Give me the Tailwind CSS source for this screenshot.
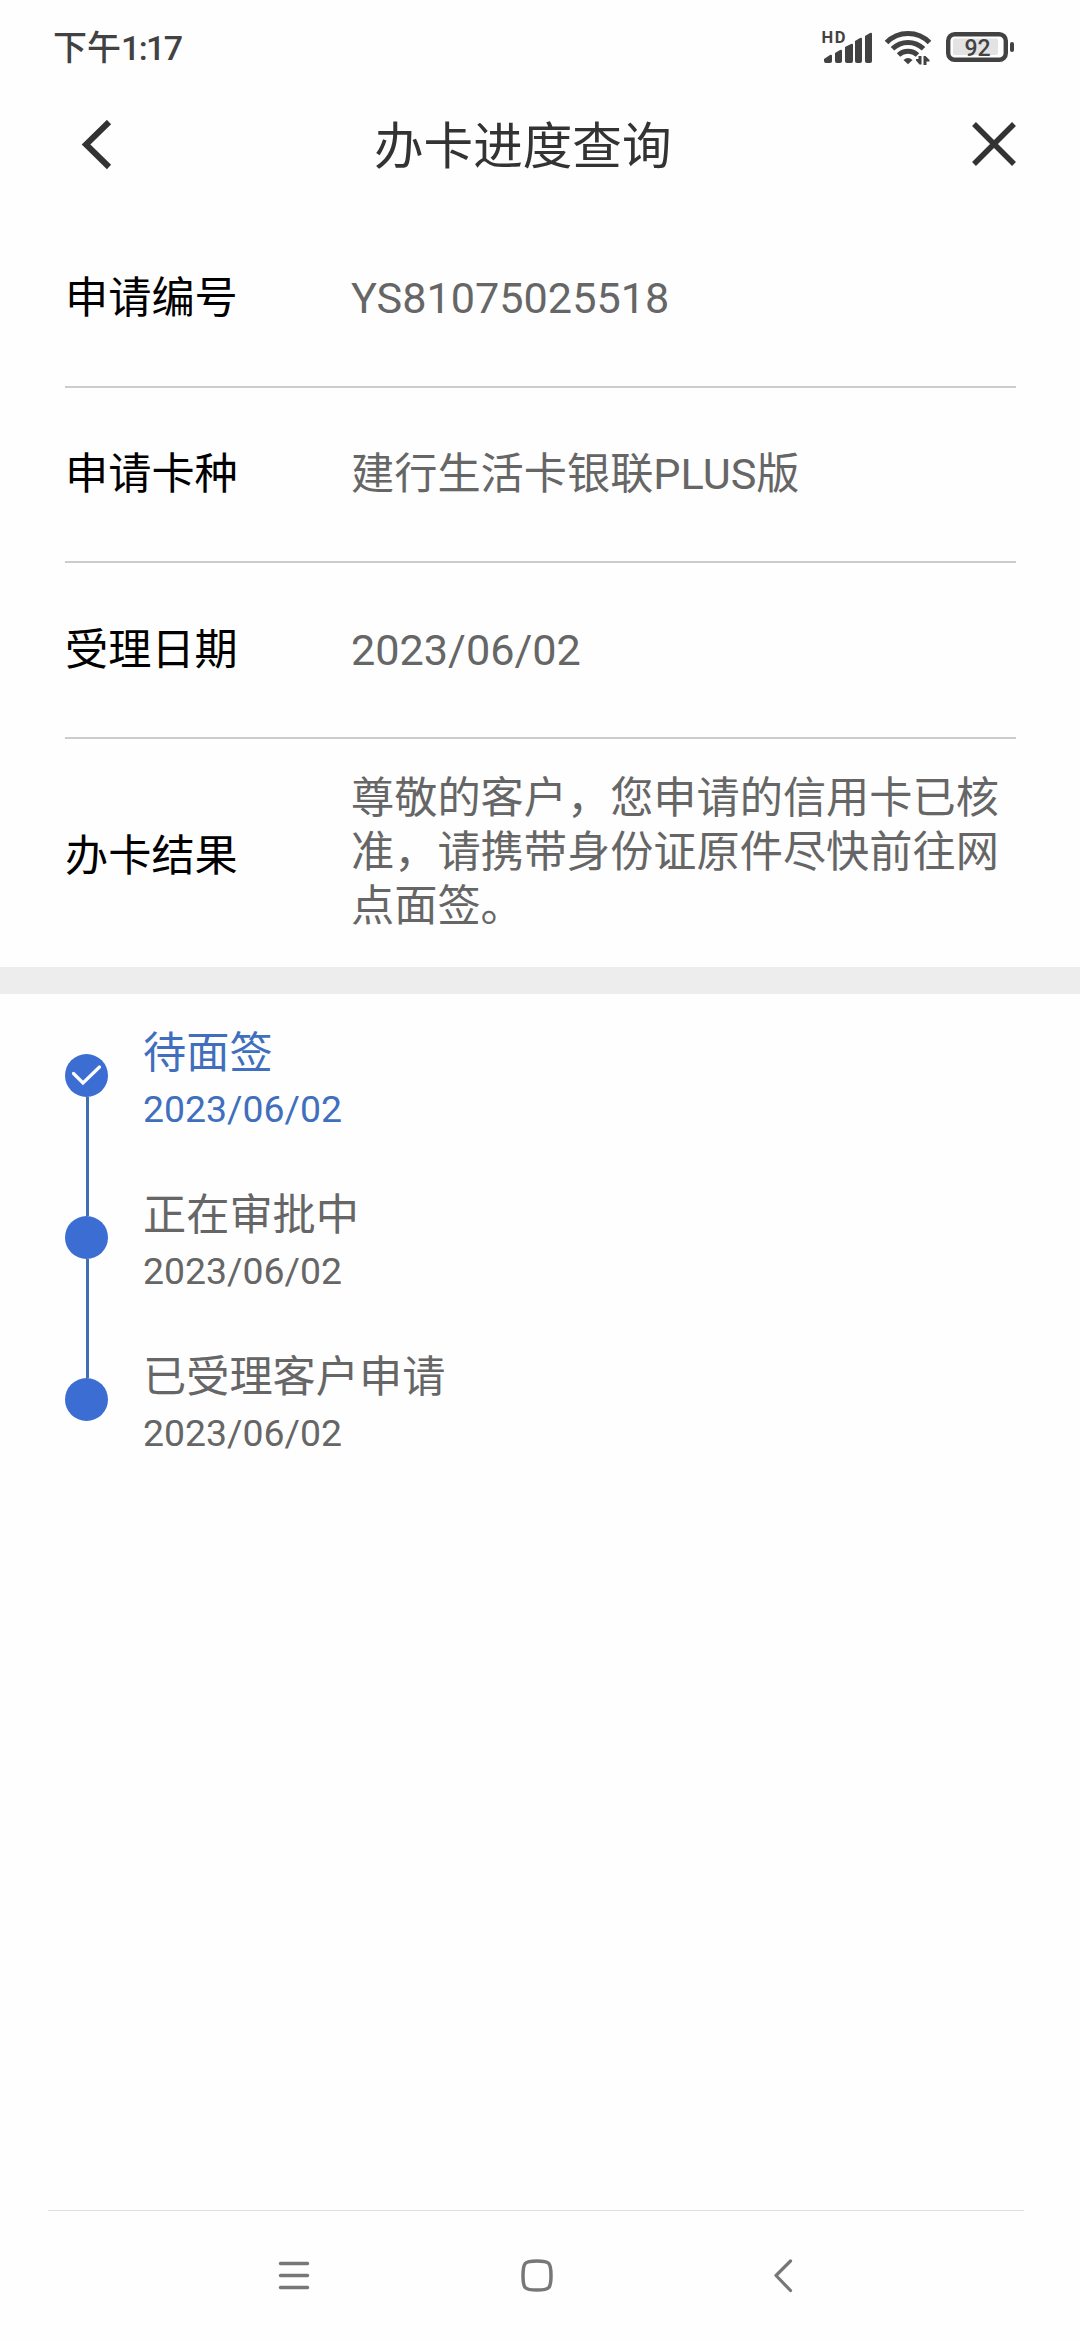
<!DOCTYPE html>
<html lang="zh-CN">
<head>
  <meta charset="UTF-8"/>
  <meta name="viewport" content="width=device-width, initial-scale=1.0"/>
  <title>办卡进度查询</title>
  <script src="https://cdn.jsdelivr.net/npm/@tailwindcss/browser@4"></script>
</head>
<body class="bg-[#fefefe] font-['Roboto','Noto_Sans_CJK_SC',sans-serif] text-[#666]">
  <div class="w-[1080px] h-[2340px] flex flex-col overflow-hidden">

    <!-- Status bar -->
    <div class="h-[96px] pl-[53px] pr-[66px] flex items-center justify-between text-[#424242]">
      <span class="font-medium text-[34px] leading-[96px]">下午<span class="tracking-[-1.6px]">1:17</span></span>
      <svg class="w-[194px] h-[40px]" viewBox="820 28 194 40" fill="currentColor">
        <text x="821.5" y="43" textLength="24" class="font-['Roboto',sans-serif] font-bold text-[16.500px]">HD</text>
        <path d="M824 61v-2l6-4q2-1 2 1v5q0 2-2 2h-4q-2 0-2-2z"/>
        <path d="M835 61v-8l5-3q2-1 2 1v10q0 2-2 2h-3q-2 0-2-2z"/>
        <path d="M845 61v-14l6-3q2-1 2 1v16q0 2-2 2h-4q-2 0-2-2z"/>
        <path d="M855 61v-20l5-3q2-1 2 1v22q0 2-2 2h-3q-2 0-2-2z"/>
        <path d="M865 61v-25l5-3q2-1 2 1v27q0 2-2 2h-3q-2 0-2-2z"/>
        <g fill="none" stroke="currentColor" stroke-width="5">
          <path d="M886.500 42.500a30 30 0 0 1 43 0"/>
          <path d="M892.500 48.800a22 22 0 0 1 31 0"/>
          <path d="M898.500 55a14 14 0 0 1 19 0"/>
        </g>
        <path d="M903.500 60q4.500-4 9 0l-4.500 4.200z"/>
        <path d="M921.500 56v8.500h-2l-3.500-4v-1.500h2.500v-3zM923.500 65v-9h2l4 4v1.500h-3v3.500z"/>
        <rect x="953" y="38.500" width="45" height="16.500" rx="2" fill="#e3e3e3"/>
        <rect x="948.200" y="34.200" width="57.600" height="25.600" rx="6.500" fill="none" stroke="currentColor" stroke-width="4.4"/>
        <rect x="1010" y="42" width="4" height="10" rx="2"/>
        <text x="964.500" y="55.500" class="font-['Roboto',sans-serif] font-medium text-[23px]">92</text>
      </svg>
    </div>

    <!-- Title bar -->
    <header class="h-[98px] pl-[80px] pr-[62px] flex items-center text-[#333]">
      <svg class="w-[32px] h-[50px]" viewBox="0 0 32 50" fill="none" stroke="currentColor" stroke-width="6">
        <path d="M29 2L6 24.500l23 22.500"/>
      </svg>
      <h1 class="ml-[262px] pt-[3px] text-[49.600px] leading-[98px]">办卡进度查询</h1>
      <svg class="ml-auto w-[48px] h-[50px]" viewBox="0 0 48 50" fill="none" stroke="currentColor" stroke-width="5.5">
        <path d="M4 4l40 40M44 4L4 44"/>
      </svg>
    </header>

    <!-- Application info -->
    <dl class="pt-[16px] pl-[65px] pr-[64px] text-[43.200px] leading-[54px]">
      <div class="h-[178px] pt-[2px] flex items-center border-b-2 border-[#ccc]">
        <dt class="w-[286px] text-black">申请编号</dt>
        <dd>YS81075025518</dd>
      </div>
      <div class="h-[175px] flex items-center border-b-2 border-[#ccc]">
        <dt class="w-[286px] text-black">申请卡种</dt>
        <dd>建行生活卡银联PLUS版</dd>
      </div>
      <div class="h-[176px] pt-px flex items-center border-b-2 border-[#ccc]">
        <dt class="w-[286px] text-black">受理日期</dt>
        <dd>2023/06/02</dd>
      </div>
      <div class="h-[228px] pt-[8px] flex items-center">
        <dt class="w-[286px] text-black">办卡结果</dt>
        <dd class="flex-1 pb-[8px]">尊敬的客户，您申请的信用卡已核准，请携带身份证原件尽快前往网点面签。</dd>
      </div>
    </dl>

    <div class="h-[27px] bg-[#ededed]"></div>

    <!-- Progress timeline -->
    <ol class="pt-[25px] pl-[65px]">
      <li class="h-[162px] flex gap-[35px] text-[#3f6fbd]">
        <div class="w-[43px] pt-[35px] flex flex-col items-center">
          <svg class="w-[43px] h-[43px] shrink-0" viewBox="0 0 43 43" fill="none">
            <circle cx="21.500" cy="21.500" r="21.500" fill="#3c6dd3"/>
            <path d="M8.500 19.500l9.500 9.500L34.500 13" stroke="#fff" stroke-width="3.200" stroke-linecap="round"/>
          </svg>
          <div class="w-[3px] h-[119px] shrink-0 ml-px bg-[#406fb4]"></div>
        </div>
        <div class="pt-[3px]">
          <p class="text-[43.200px] leading-[64px]">待面签</p>
          <p class="text-[37.400px] leading-[46px]">2023/06/02</p>
        </div>
      </li>
      <li class="h-[162px] flex gap-[35px]">
        <div class="w-[43px] pt-[35px] flex flex-col items-center">
          <div class="size-[43px] shrink-0 rounded-full bg-[#3c6dd3]"></div>
          <div class="w-[3px] h-[119px] shrink-0 ml-px bg-[#406fb4]"></div>
        </div>
        <div class="pt-[3px]">
          <p class="text-[43.200px] leading-[64px]">正在审批中</p>
          <p class="text-[37.400px] leading-[46px]">2023/06/02</p>
        </div>
      </li>
      <li class="h-[162px] flex gap-[35px]">
        <div class="w-[43px] pt-[35px]">
          <div class="size-[43px] rounded-full bg-[#3c6dd3]"></div>
        </div>
        <div class="pt-[3px]">
          <p class="text-[43.200px] leading-[64px]">已受理客户申请</p>
          <p class="text-[37.400px] leading-[46px]">2023/06/02</p>
        </div>
      </li>
    </ol>

    <!-- System navigation -->
    <nav class="mt-auto ml-[48px] mr-[56px] h-[130px] shrink-0 border-t border-[#dedede] flex items-center justify-between pl-[226px] pr-[222px] text-[#777]">
      <svg class="w-[40px] h-[40px]" viewBox="0 0 40 40" fill="none" stroke="currentColor" stroke-width="3.500" stroke-linecap="round">
        <path d="M6.500 7.500h27M6.500 19.500h27M6.500 31.500h27"/>
      </svg>
      <svg class="w-[40px] h-[40px]" viewBox="0 0 40 40" fill="none" stroke="currentColor" stroke-width="3.500">
        <path d="M19 5c12.500 0 14 1.500 14 14.500s-1.500 14.500-14 14.500-14-1.500-14-14.500 1.500-14.500 14-14.500z"/>
      </svg>
      <svg class="w-[40px] h-[40px]" viewBox="0 0 40 40" fill="none" stroke="currentColor" stroke-width="3.200" stroke-linecap="round" stroke-linejoin="round">
        <path d="M28.500 5L14 19.500l14.500 15"/>
      </svg>
    </nav>
  </div>
</body>
</html>
